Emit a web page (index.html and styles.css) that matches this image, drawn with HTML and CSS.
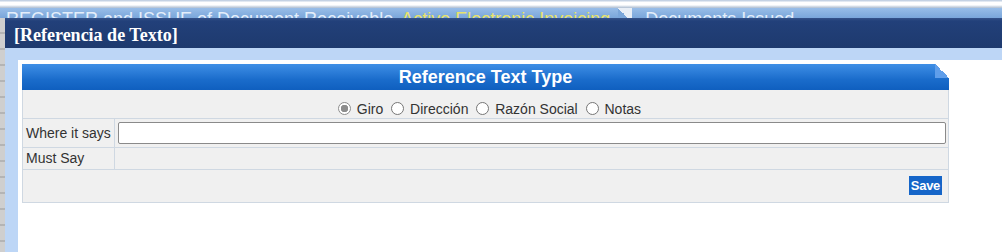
FILE: index.html
```html
<!DOCTYPE html>
<html>
    <head>
        <meta charset="utf-8" />
        <title>Referencia de Texto</title>
        <link rel="stylesheet" href="styles.css">
    </head>
    <body>
        <div class="top_strip"></div>
        <div class="tab_bar">
            <span class="tab_text">REGISTER and ISSUE of Document Receivable</span>
            <span class="tab_text tab_active">Active Electronic Invoicing</span>
            <span class="tab_fold"></span>
            <span class="tab_text">Documents Issued</span>
        </div>

        <div class="main">
            <div class="page_edge"></div>

            <div class="dialog">
                <div class="dialog_title">[Referencia de Texto]</div>
                <div class="dialog_body">
                    <div class="dialog_content">
                        <div class="panel">
                            <div class="panel_head">Reference Text Type</div>
                            <table class="panel_table">
                                <tr>
                                    <td colspan="2" class="radio_row">
                                        <label><input type="radio" name="ref_type" value="giro" checked /> Giro</label>
                                        <label><input type="radio" name="ref_type" value="direccion" /> Dirección</label>
                                        <label><input type="radio" name="ref_type" value="razon" /> Razón Social</label>
                                        <label><input type="radio" name="ref_type" value="notas" /> Notas</label>
                                    </td>
                                </tr>
                                <tr class="field_row">
                                    <td class="lbl">Where it says</td>
                                    <td><input type="text" id="txt_where" class="txt" /></td>
                                </tr>
                                <tr class="field_row short">
                                    <td class="lbl">Must Say</td>
                                    <td></td>
                                </tr>
                                <tr>
                                    <td colspan="2" class="actions">
                                        <input type="button" class="save_btn" value="Save" />
                                    </td>
                                </tr>
                            </table>
                        </div>
                    </div>
                </div>
            </div>
        </div>
    </body>
</html>
```

FILE: styles.css
```css
html, body {
    width: 100%;
    height: 100%;
}

body {
    margin: 0px;
    overflow: hidden;
    background-color: #ffffff;
    font-family: "Liberation Sans", Arial, sans-serif;
    font-size: 14px;
    color: #333333;
    display: flex;
    flex-direction: column;
}

.top_strip {
    height: 8px;
    background: linear-gradient(to bottom, #c4d2e4 0px, #c4d2e4 1px, #ffffff 2px, #ffffff 5px, #dfe6ee 6px, #aebdcf 8px);
}

.tab_bar {
    height: 10px;
    overflow: hidden;
    display: flex;
    align-items: flex-start;
    padding-left: 6px;
    background: linear-gradient(to bottom, #98bde8, #7aa6da);
}

.tab_text {
    font-size: 18px;
    line-height: 18px;
    padding-top: 2px;
    color: #e4eefa;
    white-space: nowrap;
    margin-right: 8px;
}

.tab_active {
    color: #e9e36a;
    margin-right: 8px;
}

.tab_fold {
    width: 14px;
    height: 14px;
    margin: 0px 13px 0px 0px;
    background: linear-gradient(45deg, #7aa6da 50%, #e8eef6 50%);
}

.main {
    flex: 1;
    display: flex;
}

.page_edge {
    width: 5px;
    background: repeating-linear-gradient(to bottom, #cfcfcf 0px, #cfcfcf 14px, #9a9a9a 15px, #cfcfcf 16px);
}

.dialog {
    flex: 1;
    display: flex;
    flex-direction: column;
}

.dialog_title {
    height: 30px;
    box-sizing: border-box;
    padding: 6px 0px 0px 9px;
    background: linear-gradient(to bottom, #35538a 0px, #22407a 3px, #1e3a6e 30px);
    color: #ffffff;
    font-family: "Liberation Serif", "Times New Roman", serif;
    font-weight: bold;
    font-size: 18px;
    line-height: 22px;
}

.dialog_body {
    flex: 1;
    display: flex;
    padding: 12px 0px 0px 13px;
    background-color: #bdd6f6;
}

.dialog_content {
    flex: 1;
    background-color: #ffffff;
    padding: 4px;
}

.panel {
    position: relative;
    width: 927px;
    box-sizing: border-box;
    border: 1px solid #cfd8e2;
    border-top: 0px;
    background-color: #f0f0f0;
}

.panel_head {
    height: 26px;
    margin: 0px -1px;
    background: linear-gradient(to bottom, #3f8fe6, #1a6ccb 60%, #0f5fbf);
    color: #ffffff;
    font-weight: bold;
    font-size: 18px;
    line-height: 27px;
    text-align: center;
}

.panel_head::after {
    content: "";
    position: absolute;
    top: 0px;
    right: -1px;
    width: 14px;
    height: 14px;
    background: linear-gradient(45deg, #5f9eea 50%, #ffffff 50%);
}

.panel_table {
    width: 100%;
    border-collapse: collapse;
}

.panel_table td {
    padding: 0px;
    border-top: 1px solid #cfd8e2;
}

.panel_table tr:first-child td {
    border-top: 0px;
}

.radio_row {
    height: 28px;
    text-align: center;
    padding: 10px 0px 0px 8px !important;
    box-sizing: border-box;
}

.radio_row label {
    margin: 0px 2px;
}

input[type="radio"] {
    appearance: none;
    width: 13px;
    height: 13px;
    margin: 0px 2px 0px 0px;
    border: 1px solid #767676;
    border-radius: 50%;
    background-color: #ffffff;
    vertical-align: -1px;
}

input[type="radio"]:checked {
    border-color: #8d8d8d;
    background: radial-gradient(circle, #8d8d8d 0px, #8d8d8d 3.5px, #ffffff 4px);
}

.field_row td {
    height: 28px;
}

.field_row.short td {
    height: 21px;
}

.lbl {
    width: 88px;
    padding: 0px 0px 0px 3px !important;
    border-right: 1px solid #cfd8e2;
    white-space: nowrap;
}

.txt {
    display: block;
    width: 828px;
    height: 22px;
    box-sizing: border-box;
    margin-left: 3px;
    border: 1px solid #8a8a8a;
    border-radius: 2px;
    font-size: 14px;
}

.actions {
    height: 32px;
    text-align: right;
    padding-right: 6px !important;
}

.save_btn {
    height: 19px;
    padding: 0px 2px;
    border-style: none;
    background-color: #1565c8;
    color: #ffffff;
    font-family: "Liberation Sans", Arial, sans-serif;
    font-weight: bold;
    font-size: 13px;
    letter-spacing: -0.3px;
    cursor: pointer;
    vertical-align: middle;
}
```
